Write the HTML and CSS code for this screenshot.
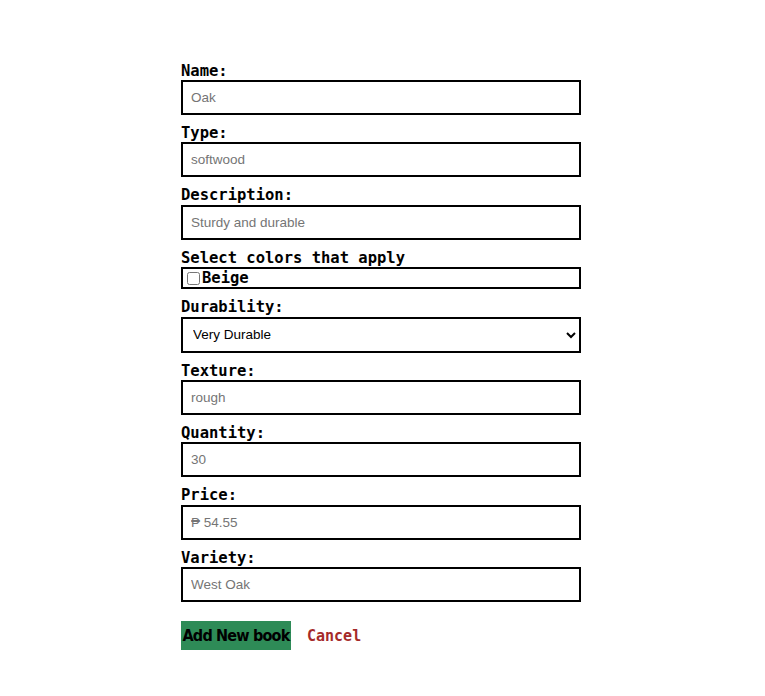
FILE: index.html
```html
<!DOCTYPE html>
<html>
<head>
<meta charset="utf-8">
<link rel="stylesheet" href="styles.css">
</head>
<body>
<form class="form">
  <label class="lbl">Name:</label>
  <input class="field" type="text" placeholder="Oak">
  <label class="lbl">Type:</label>
  <input class="field" type="text" placeholder="softwood">
  <label class="lbl">Description:</label>
  <input class="field" type="text" placeholder="Sturdy and durable">
  <label class="lbl">Select colors that apply</label>
  <div class="checks"><label class="chk"><input type="checkbox" class="cb">Beige</label></div>
  <label class="lbl">Durability:</label>
  <select class="field sel"><option>Very Durable</option></select>
  <label class="lbl">Texture:</label>
  <input class="field" type="text" placeholder="rough">
  <label class="lbl">Quantity:</label>
  <input class="field" type="text" placeholder="30">
  <label class="lbl">Price:</label>
  <input class="field" type="text" placeholder="₱ 54.55">
  <label class="lbl">Variety:</label>
  <input class="field" type="text" placeholder="West Oak">
  <div class="actions">
    <button type="button" class="add">Add New book</button>
    <a class="cancel">Cancel</a>
  </div>
</form>
</body>
</html>
```
FILE: styles.css
```css
html, body { margin: 0; padding: 0; background: #fff; }
.form {
  display: flex;
  flex-direction: column;
  width: 400px;
  margin-left: 181px;
  padding-top: 62.6px;
}
.lbl {
  font-family: "DejaVu Sans Mono", "Liberation Mono", monospace;
  font-weight: bold;
  font-size: 15.5px;
  line-height: 17.4px;
  height: 17.4px;
  color: #000;
}
.field {
  box-sizing: border-box;
  width: 400px;
  height: 35px;
  border: 2px solid #000;
  border-radius: 0;
  padding: 0 8px;
  margin: 0 0 10px 0;
  font-family: "Liberation Sans", Arial, sans-serif;
  font-size: 13.5px;
  background: #fff;
  outline: none;
}
.field::placeholder { color: #757575; }
.sel {
  height: 36px;
  padding: 0 6px;
  color: #000;
}
.checks {
  box-sizing: border-box;
  width: 400px;
  height: 22px;
  border: 2px solid #000;
  margin-bottom: 10px;
  display: flex;
  align-items: center;
}
.chk {
  display: flex;
  align-items: center;
  font-family: "DejaVu Sans Mono", "Liberation Mono", monospace;
  font-weight: bold;
  font-size: 15.5px;
}
.cb {
  width: 13px;
  height: 13px;
  margin: 0 2px 0 4px;
}
.actions {
  display: flex;
  align-items: center;
  margin-top: 9px;
  gap: 16px;
}
.add {
  background: #2e8b57;
  border: none;
  height: 29px;
  width: 110px;
  padding: 0;
  font-family: "DejaVu Sans Condensed", "DejaVu Sans", sans-serif;
  font-stretch: condensed;
  font-weight: bold;
  font-size: 16px;
  letter-spacing: -0.8px;
  color: #000;
}
.cancel {
  font-family: "DejaVu Sans Mono", "Liberation Mono", monospace;
  font-weight: bold;
  font-size: 15px;
  color: #a52a2a;
}
```
